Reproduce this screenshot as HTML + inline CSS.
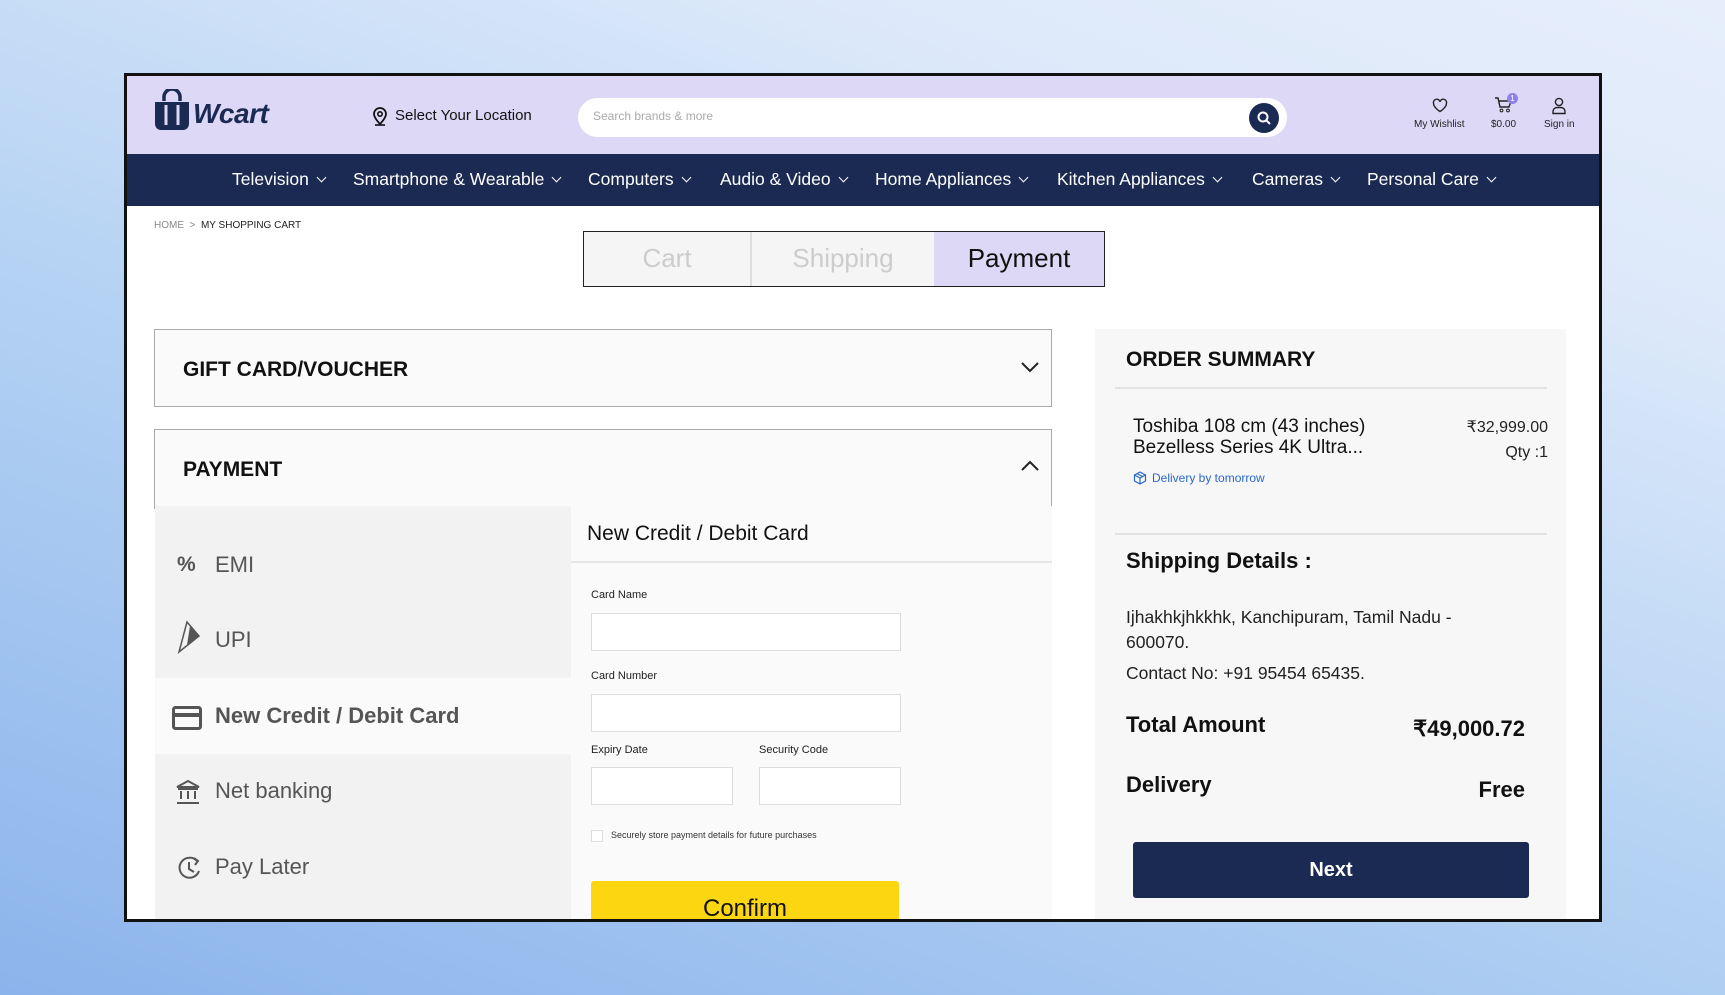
<!DOCTYPE html>
<html><head><meta charset="utf-8"><style>
*{margin:0;padding:0;box-sizing:border-box}
body{width:1725px;height:995px;overflow:hidden;position:relative;font-family:"Liberation Sans",sans-serif;
background:linear-gradient(20deg,#8cb4ec 0%,#b4d2f3 45%,#dde9fa 80%,#e6eefb 100%)}
.a{position:absolute}
.frame{left:124px;top:73px;width:1478px;height:849px;border:3px solid #111;background:#fff;overflow:hidden}
.hdr{left:0;top:0;width:1472px;height:78px;background:#dcd8f6}
.nav{left:0;top:78px;width:1472px;height:52px;background:#1b2a52;color:#fff;font-size:17.5px}
.nav span{position:absolute;top:15px;white-space:nowrap}
.nav span:after{content:"";display:inline-block;width:6px;height:6px;border-right:1.5px solid #fff;border-bottom:1.5px solid #fff;transform:rotate(45deg);margin-left:9px;position:relative;top:-4px}
.lbl{font-size:10px;color:#222}
.box{background:#fff;border:1.5px solid #ddd}
.menu{font-size:22px;color:#555}
</style></head><body>
<div class="a frame">
 <div class="a hdr">
  <svg class="a" style="left:27px;top:13px" width="36" height="42" viewBox="0 0 36 42"><path d="M10 12V8a8 8 0 0 1 16 0v4" fill="none" stroke="#1b2a52" stroke-width="3.5"/><path d="M1 13h34v22a6 6 0 0 1-6 6H7a6 6 0 0 1-6-6z" fill="#1b2a52"/><path d="M12 16v20M24 16v20" stroke="#dcd8f6" stroke-width="3"/></svg>
  <div class="a" style="left:66px;top:22px;font-size:28px;font-weight:bold;font-style:italic;color:#1b2a52;letter-spacing:-0.5px">Wcart</div>
  <svg class="a" style="left:245px;top:30px" width="16" height="20" viewBox="0 0 16 20"><path d="M8 18s6-6 6-10A6 6 0 0 0 2 8c0 4 6 10 6 10z" fill="none" stroke="#111" stroke-width="1.8"/><circle cx="8" cy="8" r="2.2" fill="none" stroke="#111" stroke-width="1.6"/><path d="M3 19h10" stroke="#111" stroke-width="1.6"/></svg>
  <div class="a" style="left:268px;top:31px;font-size:15px;color:#111">Select Your Location</div>
  <div class="a" style="left:451px;top:22px;width:709px;height:39px;background:#fff;border-radius:20px"></div>
  <div class="a" style="left:466px;top:33px;font-size:12px;color:#aaa">Search brands &amp; more</div>
  <div class="a" style="left:1122px;top:27px;width:30px;height:30px;border-radius:50%;background:#1b2a52"></div>
  <svg class="a" style="left:1129px;top:34px" width="16" height="16" viewBox="0 0 16 16"><circle cx="7" cy="7" r="4.5" fill="none" stroke="#fff" stroke-width="2"/><path d="M10.3 10.3L14 14" stroke="#fff" stroke-width="2"/></svg>
  <svg class="a" style="left:1305px;top:22px" width="16" height="15" viewBox="0 0 16 15"><path d="M8 13.5S1.5 9.5 1.5 5.2A3.3 3.3 0 0 1 8 3.8a3.3 3.3 0 0 1 6.5 1.4C14.5 9.5 8 13.5 8 13.5z" fill="none" stroke="#222" stroke-width="1.4"/></svg>
  <div class="a lbl" style="left:1287px;top:43px">My Wishlist</div>
  <svg class="a" style="left:1367px;top:20px" width="20" height="18" viewBox="0 0 20 18"><path d="M1 2h3l2 9h9l2-6H5" fill="none" stroke="#222" stroke-width="1.4"/><circle cx="7.5" cy="14.5" r="1.4" fill="none" stroke="#222"/><circle cx="14" cy="14.5" r="1.4" fill="none" stroke="#222"/></svg>
  <div class="a" style="left:1380px;top:17px;width:11px;height:11px;border-radius:50%;background:#8e82e8;color:#fff;font-size:8px;text-align:center;line-height:11px">1</div>
  <div class="a lbl" style="left:1364px;top:43px">$0.00</div>
  <svg class="a" style="left:1424px;top:21px" width="16" height="18" viewBox="0 0 16 18"><circle cx="8" cy="5" r="3.6" fill="none" stroke="#222" stroke-width="1.4"/><path d="M2 16.5v-2a4 4 0 0 1 4-4h4a4 4 0 0 1 4 4v2z" fill="none" stroke="#222" stroke-width="1.4"/></svg>
  <div class="a lbl" style="left:1417px;top:43px">Sign in</div>
 </div>
 <div class="a nav">
  <span style="left:105px">Television</span><span style="left:226px">Smartphone &amp; Wearable</span><span style="left:461px">Computers</span><span style="left:593px">Audio &amp; Video</span><span style="left:748px">Home Appliances</span><span style="left:930px">Kitchen Appliances</span><span style="left:1125px">Cameras</span><span style="left:1240px">Personal Care</span>
 </div>
 <div class="a" style="left:27px;top:144px;font-size:10px;color:#888">HOME &nbsp;&gt;&nbsp; <b style="color:#222;font-weight:normal">MY SHOPPING CART</b></div>
 <div class="a" style="left:456px;top:155px;width:522px;height:56px;border:1.5px solid #222;background:#f5f5f5;display:flex;font-size:26px">
  <div style="width:168px;border-right:2px solid #ddd;color:#ccc;text-align:center;line-height:53px">Cart</div>
  <div style="width:182px;color:#ccc;text-align:center;line-height:53px">Shipping</div>
  <div style="flex:1;background:#dcd8f6;color:#111;text-align:center;line-height:53px">Payment</div>
 </div>
 <div class="a" style="left:27px;top:253px;width:898px;height:78px;border:1.5px solid #aaa;background:#fafafa"></div>
 <div class="a" style="left:56px;top:282px;font-size:21px;font-weight:bold;color:#111">GIFT CARD/VOUCHER</div>
 <svg class="a" style="left:893px;top:285px" width="20" height="12" viewBox="0 0 20 12"><path d="M2 2l8 8 8-8" fill="none" stroke="#222" stroke-width="2"/></svg>
 <div class="a" style="left:27px;top:353px;width:898px;height:80px;border:1.5px solid #aaa;border-bottom:none;background:#fafafa"></div>
 <div class="a" style="left:56px;top:382px;font-size:21px;font-weight:bold;color:#111">PAYMENT</div>
 <svg class="a" style="left:893px;top:384px" width="20" height="12" viewBox="0 0 20 12"><path d="M2 10l8-8 8 8" fill="none" stroke="#222" stroke-width="2"/></svg>
 <div class="a" style="left:28px;top:430px;width:416px;height:420px;background:#f2f2f2"></div>
 <div class="a" style="left:28px;top:602px;width:416px;height:76px;background:#fafafa"></div>
 <div class="a menu" style="left:50px;top:477px;font-size:21px;font-weight:bold">%</div>
 <div class="a menu" style="left:88px;top:476px">EMI</div>
 <svg class="a" style="left:48px;top:544px" width="26" height="34" viewBox="0 0 26 34"><path d="M12 2l12 14-20 16z" fill="none" stroke="#555" stroke-width="1.5"/><path d="M15 6l9 10-12 9z" fill="#555"/></svg>
 <div class="a menu" style="left:88px;top:551px">UPI</div>
 <svg class="a" style="left:45px;top:630px" width="30" height="24" viewBox="0 0 30 24"><rect x="1.5" y="1.5" width="27" height="21" rx="2" fill="none" stroke="#555" stroke-width="3"/><rect x="1.5" y="7" width="27" height="4" fill="#555"/></svg>
 <div class="a menu" style="left:88px;top:627px;font-weight:bold">New Credit / Debit Card</div>
 <svg class="a" style="left:48px;top:703px" width="26" height="26" viewBox="0 0 26 26"><path d="M2 8L13 2l11 6z" fill="none" stroke="#555" stroke-width="2"/><path d="M6 12v8M13 12v8M20 12v8M2 24h22M3 10h20" stroke="#555" stroke-width="2"/></svg>
 <div class="a menu" style="left:88px;top:702px">Net banking</div>
 <svg class="a" style="left:50px;top:780px" width="26" height="24" viewBox="0 0 26 24"><path d="M20 5A10 10 0 1 0 22 15" fill="none" stroke="#555" stroke-width="2"/><path d="M12 6v7l5 3" fill="none" stroke="#555" stroke-width="2"/><path d="M17 2l4 3-3 4" fill="none" stroke="#555" stroke-width="2"/></svg>
 <div class="a menu" style="left:88px;top:778px">Pay Later</div>
 <div class="a" style="left:444px;top:430px;width:481px;height:420px;background:#fafafa"></div>
 <div class="a" style="left:444px;top:485px;width:481px;height:2px;background:#e6e6e6"></div>
 <div class="a" style="left:460px;top:446px;font-size:21px;color:#111">New Credit / Debit Card</div>
 <div class="a lbl" style="left:464px;top:513px;font-size:11px">Card Name</div>
 <div class="a box" style="left:464px;top:537px;width:310px;height:38px"></div>
 <div class="a lbl" style="left:464px;top:594px;font-size:11px">Card Number</div>
 <div class="a box" style="left:464px;top:618px;width:310px;height:38px"></div>
 <div class="a lbl" style="left:464px;top:668px;font-size:11px">Expiry Date</div>
 <div class="a lbl" style="left:632px;top:668px;font-size:11px">Security Code</div>
 <div class="a box" style="left:464px;top:691px;width:142px;height:38px"></div>
 <div class="a box" style="left:632px;top:691px;width:142px;height:38px"></div>
 <div class="a box" style="left:464px;top:754px;width:12px;height:12px"></div>
 <div class="a" style="left:484px;top:754px;font-size:9px;color:#333">Securely store payment details for future purchases</div>
 <div class="a" style="left:464px;top:805px;width:308px;height:50px;background:#fdd612;border-radius:3px;text-align:center;font-size:24px;color:#111;padding-top:14px">Confirm</div>
 <div class="a" style="left:968px;top:253px;width:471px;height:600px;background:#f7f7f7"></div>
 <div class="a" style="left:999px;top:272px;font-size:21px;font-weight:bold;color:#111">ORDER SUMMARY</div>
 <div class="a" style="left:988px;top:311px;width:432px;height:1.5px;background:#e2e2e2"></div>
 <div class="a" style="left:1006px;top:340px;font-size:19px;color:#111;line-height:21px">Toshiba 108 cm (43 inches)<br>Bezelless Series 4K Ultra...</div>
 <div class="a" style="left:1250px;top:341px;width:171px;text-align:right;font-size:16px;color:#222">₹32,999.00</div>
 <div class="a" style="left:1250px;top:368px;width:171px;text-align:right;font-size:16px;color:#222">Qty :1</div>
 <svg class="a" style="left:1006px;top:395px" width="14" height="14" viewBox="0 0 14 14"><path d="M7 1l5.5 3v6L7 13 1.5 10V4z M1.5 4L7 7l5.5-3 M7 7v6 M4 2.5l5.5 3" fill="none" stroke="#2a67c9" stroke-width="1.2"/></svg>
 <div class="a" style="left:1025px;top:395px;font-size:12px;color:#2a67c9">Delivery by tomorrow</div>
 <div class="a" style="left:988px;top:457px;width:432px;height:1.5px;background:#e2e2e2"></div>
 <div class="a" style="left:999px;top:472px;font-size:22px;font-weight:bold;color:#111">Shipping Details :</div>
 <div class="a" style="left:999px;top:529px;font-size:17.5px;color:#222;line-height:25px">Ijhakhkjhkkhk, Kanchipuram, Tamil Nadu -<br>600070.</div>
 <div class="a" style="left:999px;top:587px;font-size:17.5px;color:#222">Contact No: +91 95454 65435.</div>
 <div class="a" style="left:999px;top:636px;font-size:22px;font-weight:bold;color:#111">Total Amount</div>
 <div class="a" style="left:1200px;top:640px;width:198px;text-align:right;font-size:22px;font-weight:bold;color:#111">₹49,000.72</div>
 <div class="a" style="left:999px;top:696px;font-size:22px;font-weight:bold;color:#111">Delivery</div>
 <div class="a" style="left:1200px;top:701px;width:198px;text-align:right;font-size:22px;font-weight:bold;color:#111">Free</div>
 <div class="a" style="left:1006px;top:766px;width:396px;height:56px;background:#1b2a52;border-radius:3px;color:#fff;font-size:20px;font-weight:bold;text-align:center;line-height:56px">Next</div>
</div>
</body></html>
